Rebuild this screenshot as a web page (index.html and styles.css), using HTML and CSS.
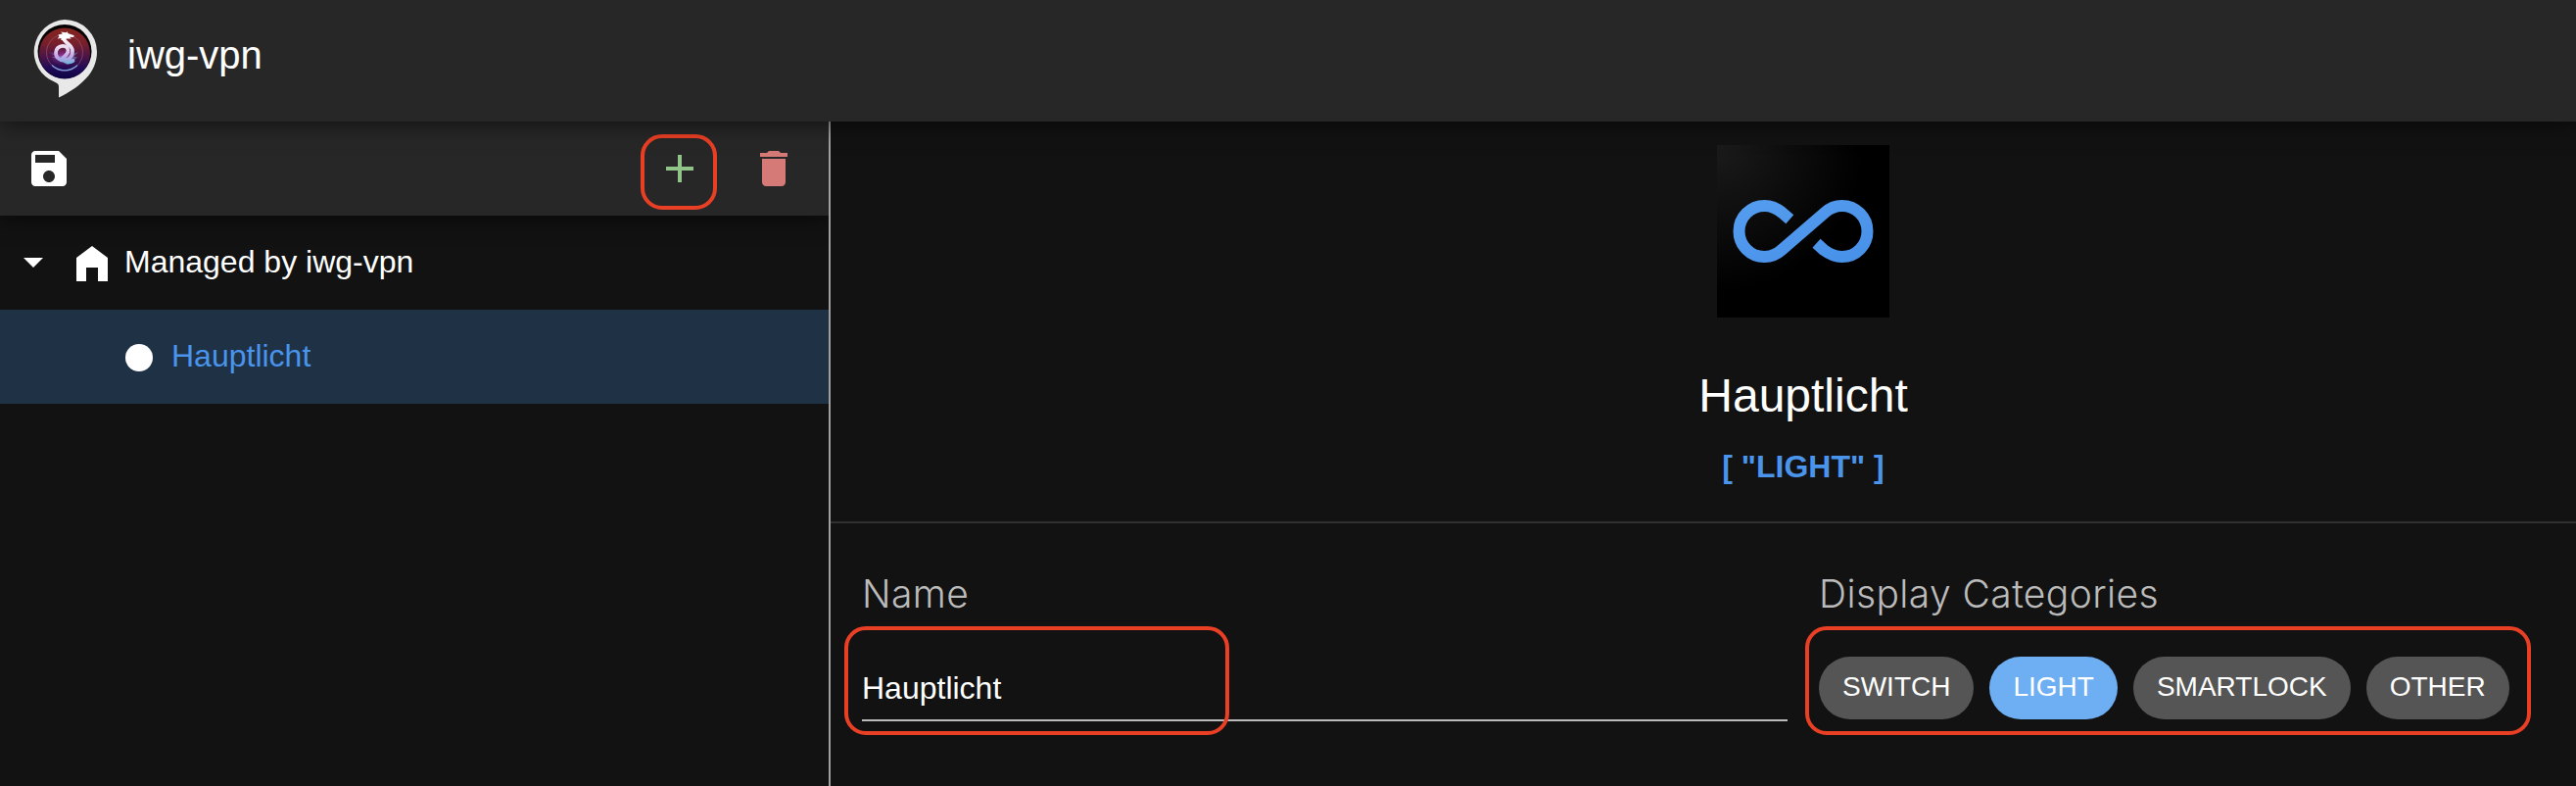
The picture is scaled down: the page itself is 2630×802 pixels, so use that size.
FILE: index.html
```html
<!DOCTYPE html>
<html lang="en">
<head>
<meta charset="utf-8">
<title>iwg-vpn</title>
<link rel="stylesheet" href="styles.css">
</head>
<body>
<header class="app-header">
  <svg class="logo" viewBox="0 0 66 80">
    <defs>
      <linearGradient id="orb" x1="0" y1="0" x2="0" y2="1">
        <stop offset="0" stop-color="#86251f"/>
        <stop offset=".3" stop-color="#781f2a"/>
        <stop offset=".55" stop-color="#4d1546"/>
        <stop offset=".8" stop-color="#200a58"/>
        <stop offset="1" stop-color="#0c0440"/>
      </linearGradient>
      <linearGradient id="dragon" gradientUnits="userSpaceOnUse" x1="0" y1="14" x2="0" y2="46">
        <stop offset="0" stop-color="#fff"/>
        <stop offset=".45" stop-color="#e9dcf0"/>
        <stop offset=".75" stop-color="#c3a3e4"/>
        <stop offset="1" stop-color="#62b4d8"/>
      </linearGradient>
      <radialGradient id="glow">
        <stop offset="0" stop-color="#d050e0" stop-opacity=".7"/>
        <stop offset="1" stop-color="#8030a0" stop-opacity="0"/>
      </radialGradient>
    </defs>
    <path d="M33 0a33 33 0 0 1 33 33C66 54 50 68 27 79.600V69C27 66 26 65 23 63.800A33 33 0 0 1 33 0z" fill="#e8e8e8"/>
    <circle cx="33" cy="32.500" r="27.500" fill="#050205"/>
    <circle cx="33" cy="34.500" r="26" fill="url(#orb)"/>
    <circle cx="33" cy="33.500" r="18.500" fill="none" stroke="#a86a8c" stroke-width="1" opacity=".5"/>
    <path d="M20 46.500a18.500 18.500 0 0 0 26 0" fill="none" stroke="#7c9bd0" stroke-width="1.400"/>
    <ellipse cx="31" cy="38" rx="14" ry="9" fill="url(#glow)"/>
    <path d="M17 33l8 5-5 0 8 4 8 4 5-2 5-6-4 0 5-5-10 4-10 0z" fill="#6b86bd" opacity=".6"/>
    <path d="M32 19C33 24.500 41 25 41 32C41 38.500 37 41.500 32 41.500C27 41.500 24 38 24 34C24 30 27 26.800 31 26.800C34.500 26.800 36.500 29 36.500 32C36.500 35.500 33 37 31 39.500C33 43.500 37 44.500 41.500 42" fill="none" stroke="url(#dragon)" stroke-width="3.800" stroke-linecap="round"/>
    <path d="M26.500 15.500l4.500-1.300-2-1.700 5.300.8 1.700-1 .3 1.700 6.500 2.300-.8 1.700-4-.200 1.800 1.600-5 .2-2 2.200-3.500-1 .2-1.800-4 .4 1.900-2z" fill="#fff"/>
  </svg>
  <h1 class="app-title">iwg-vpn</h1>
</header>

<div class="workspace">
  <aside class="sidebar">
    <div class="toolbar">
      <svg class="icon" viewBox="0 0 24 24" fill="#fff"><path d="M17 3H5c-1.110 0-2 .9-2 2v14c0 1.100.890 2 2 2h14c1.100 0 2-.9 2-2V7l-4-4zm-5 16c-1.660 0-3-1.340-3-3s1.340-3 3-3 3 1.340 3 3-1.340 3-3 3zm3-10H5V5h10v4z"/></svg>
      <div class="toolbar-actions">
        <div class="add-action">
          <svg class="icon" viewBox="0 0 24 24" fill="#90c489"><path d="M19 13h-6v6h-2v-6H5v-2h6V5h2v6h6v2z"/></svg>
          <span class="callout callout-add"></span>
        </div>
        <svg class="icon" viewBox="0 0 24 24" fill="#d67a77"><path d="M6 19c0 1.100.9 2 2 2h8c1.100 0 2-.9 2-2V7H6v12zM19 4h-3.500l-1-1h-5l-1 1H5v2h14V4z"/></svg>
      </div>
    </div>
    <div class="tree-row">
      <svg class="caret" viewBox="0 0 20 10"><path d="M0 0h20L10 10z" fill="#fff"/></svg>
      <svg class="house" viewBox="0 0 32 36"><path d="M16 0L32 12V36H22V22H10V36H0V12z" fill="#fff"/></svg>
      <span class="tree-label">Managed by iwg-vpn</span>
    </div>
    <div class="tree-row tree-row-selected">
      <span class="node-dot"></span>
      <span class="tree-label">Hauptlicht</span>
    </div>
  </aside>

  <main class="details">
    <section class="summary">
      <svg class="device-image" viewBox="0 0 176 176">
        <defs>
          <radialGradient id="tile" cx="0" cy="0" r="1">
            <stop offset="0" stop-color="#1b1b1b"/>
            <stop offset=".85" stop-color="#000"/>
          </radialGradient>
          <linearGradient id="loop" x1="0" y1="0" x2="1" y2="1">
            <stop offset="0" stop-color="#549cee"/>
            <stop offset="1" stop-color="#4891e9"/>
          </linearGradient>
        </defs>
        <rect width="176" height="176" fill="url(#tile)"/>
        <path d="M74.300 75.800L66.500 69C61 64.500 56 62 48.500 62a26 26 0 0 0 0 52C55.500 114 61 111.500 66 107L110 69C115 64.500 120.500 62 127.500 62a26 26 0 0 1 0 52C120.500 114 115 111.500 109 107L101.500 100.200" fill="none" stroke="url(#loop)" stroke-width="12"/>
      </svg>
      <h2 class="device-name">Hauptlicht</h2>
      <p class="device-category">[ "LIGHT" ]</p>
    </section>
    <section class="form">
      <div class="field">
        <div class="field-label">Name</div>
        <div class="text-input">Hauptlicht</div>
        <span class="callout callout-name"></span>
      </div>
      <div class="field">
        <div class="field-label">Display Categories</div>
        <div class="chips">
          <span class="chip">SWITCH</span>
          <span class="chip chip-active">LIGHT</span>
          <span class="chip">SMARTLOCK</span>
          <span class="chip">OTHER</span>
        </div>
        <span class="callout callout-categories"></span>
      </div>
    </section>
  </main>
</div>
</body>
</html>
```
FILE: styles.css
```css
* { box-sizing: border-box; }

body {
  margin: 0;
  height: 802px;
  display: flex;
  flex-direction: column;
  overflow: hidden;
  background: #121212;
  color: #fff;
  font-family: "Liberation Sans", Arial, sans-serif;
}

h1, h2, p { margin: 0; font-weight: 400; }
svg { display: block; flex: none; }

.app-header {
  position: relative;
  z-index: 2;
  height: 124px;
  flex: none;
  display: flex;
  align-items: flex-start;
  gap: 31px;
  padding: 20px 33px;
  background: #272727;
  box-shadow: 0 4px 20px rgba(0, 0, 0, .5);
}

.logo { width: 66px; height: 80px; }
.app-title { font-size: 40px; line-height: 46px; padding-top: 13px; }

.workspace { flex: 1; display: flex; min-height: 0; }

.sidebar {
  width: 848px;
  flex: none;
  border-right: 2px solid #a0a0a0;
}

.toolbar {
  position: relative;
  height: 96px;
  display: flex;
  align-items: center;
  justify-content: space-between;
  padding: 0 32px 0 26px;
  background: #272727;
  box-shadow: 0 4px 20px rgba(0, 0, 0, .5);
  clip-path: inset(0 0 -30px 0);
}

.toolbar-actions { display: flex; gap: 48px; }
.icon { width: 48px; height: 48px; }
.add-action { position: relative; }

.callout {
  position: absolute;
  border: 4px solid #e93f24;
  border-radius: 22px;
}

.callout-add { left: -16px; top: -11px; width: 78px; height: 77px; }
.callout-name { left: -18px; top: 63px; width: 393px; height: 111px; }
.callout-categories { left: -14px; top: 63px; width: 741px; height: 111px; }

.tree-row {
  height: 96px;
  display: flex;
  align-items: center;
  padding-left: 24px;
  font-size: 32px;
  line-height: 36px;
}

.tree-row-selected { padding-left: 128px; background: #1e3145; color: #4a94ec; }
.caret { width: 20px; height: 10px; margin-right: 34px; }
.house { width: 32px; height: 36px; margin: 2px 17px 0 0; }
.tree-label { padding-bottom: 2px; }
.node-dot {
  width: 28px;
  height: 28px;
  margin: 2px 19px 0 0;
  border-radius: 50%;
  background: #fff;
}

.details { flex: 1; min-width: 0; }

.summary {
  height: 410px;
  display: flex;
  flex-direction: column;
  align-items: center;
  padding: 24px 0 0 204px;
  border-bottom: 2px solid #303030;
}

.device-image { width: 176px; height: 176px; }
.device-name { margin-top: 53px; font-size: 48px; line-height: 54px; }
.device-category {
  margin-top: 27px;
  font-size: 32px;
  line-height: 36px;
  font-weight: 700;
  color: #4a94ec;
}

.form {
  display: grid;
  grid-template-columns: 945px 1fr;
  gap: 32px;
  padding: 42px 32px 0;
}

.field { position: relative; }
.field-label {
  height: 60px;
  font-family: Inter, "Liberation Sans", sans-serif;
  font-size: 39px;
  font-weight: 300;
  letter-spacing: .4px;
  line-height: 60px;
  color: #bbb;
  white-space: nowrap;
}

.text-input {
  height: 100px;
  padding-top: 48px;
  border-bottom: 2px solid #bbb;
  font-size: 32px;
  line-height: 36px;
}

.chips { display: flex; gap: 16px; padding-top: 34px; }
.chip {
  height: 64px;
  padding: 0 24px;
  border-radius: 32px;
  background: #555;
  font-size: 28px;
  line-height: 62px;
}
.chip-active { background: #6eaef2; }
```
